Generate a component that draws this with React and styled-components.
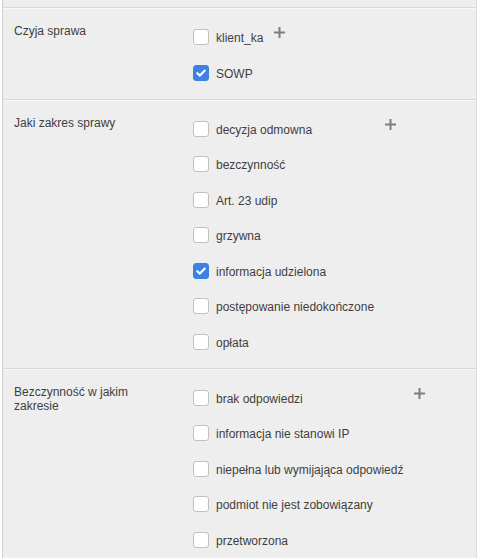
import React from "react";
import styled, { createGlobalStyle } from "styled-components";

const GlobalStyle = createGlobalStyle`
  html, body {
    margin: 0;
    padding: 0;
    background: #fff;
    overflow: hidden;
  }
  body {
    font-family: "Liberation Sans", Arial, sans-serif;
  }
`;

const sections = [
  {
    label: "Czyja sprawa",
    options: [
      { name: "klient_ka", checked: false },
      { name: "SOWP", checked: true },
    ],
  },
  {
    label: "Jaki zakres sprawy",
    options: [
      { name: "decyzja odmowna", checked: false },
      { name: "bezczynność", checked: false },
      { name: "Art. 23 udip", checked: false },
      { name: "grzywna", checked: false },
      { name: "informacja udzielona", checked: true },
      { name: "postępowanie niedokończone", checked: false },
      { name: "opłata", checked: false },
    ],
  },
  {
    label: "Bezczynność w jakim zakresie",
    options: [
      { name: "brak odpowiedzi", checked: false },
      { name: "informacja nie stanowi IP", checked: false },
      { name: "niepełna lub wymijająca odpowiedź", checked: false },
      { name: "podmiot nie jest zobowiązany", checked: false },
      { name: "przetworzona", checked: false },
    ],
  },
];

const Panel = styled.div`
  box-sizing: border-box;
  width: 475px;
  margin-left: 2px;
  background: #eeeeee;
  border-left: 1px solid #cfcfcf;
  border-right: 1px solid #dedede;
`;

const TopStub = styled.div`
  height: 7px;
`;

const Section = styled.div`
  display: flex;
  align-items: flex-start;
  border-top: 1px solid #d8d8d8;
  box-shadow: inset 0 1px 0 #f8f8f8;
  padding-bottom: 18px;
`;

const Label = styled.div`
  box-sizing: border-box;
  flex: 0 0 190px;
  padding: 16px 36px 0 11px;
  font-size: 12px;
  line-height: 14px;
  color: #3e3e3e;
`;

const OptionList = styled.div`
  display: flex;
  flex-direction: column;
  gap: 19.5px;
  padding-top: 21px;
`;

const Row = styled.label`
  display: flex;
  align-items: flex-start;
  gap: 7px;
  height: 16px;
  cursor: pointer;
`;

const Box = styled.span`
  box-sizing: border-box;
  flex: 0 0 16px;
  width: 16px;
  height: 16px;
  border-radius: 3px;
  display: flex;
  align-items: center;
  justify-content: center;
  background: ${(p) => (p.checked ? "#3b82e4" : "#ffffff")};
  border: 1px solid ${(p) => (p.checked ? "#3b82e4" : "#c4c0bc")};
`;

const OptionText = styled.span`
  font-size: 12px;
  line-height: 16px;
  margin-top: 1px;
  color: #3e3e3e;
  white-space: nowrap;
`;

const AddButton = styled.button`
  margin: 19px 0 0 11px;
  padding: 0;
  border: none;
  background: none;
  width: 11px;
  height: 11px;
  display: flex;
  cursor: pointer;
`;

const Check = () => (
  <svg width="12" height="12" viewBox="0 0 12 12">
    <path
      d="M2.3 6.2 L4.9 8.6 L9.8 3.6"
      fill="none"
      stroke="#fff"
      strokeWidth="2.2"
      strokeLinecap="round"
      strokeLinejoin="round"
    />
  </svg>
);

const Plus = () => (
  <svg width="11" height="11" viewBox="0 0 11 11">
    <rect x="0" y="4.5" width="11" height="2" fill="#7d7d7d" />
    <rect x="4.5" y="0" width="2" height="11" fill="#7d7d7d" />
  </svg>
);

const App = () => {
  return (
    <>
      <GlobalStyle />
      <Panel>
        <TopStub />
        {sections.map((s) => (
          <Section key={s.label}>
            <Label>{s.label}</Label>
            <OptionList>
              {s.options.map((o) => (
                <Row key={o.name}>
                  <Box checked={o.checked}>{o.checked && <Check />}</Box>
                  <OptionText>{o.name}</OptionText>
                </Row>
              ))}
            </OptionList>
            <AddButton aria-label="dodaj">
              <Plus />
            </AddButton>
          </Section>
        ))}
      </Panel>
    </>
  );
};

export default App;
